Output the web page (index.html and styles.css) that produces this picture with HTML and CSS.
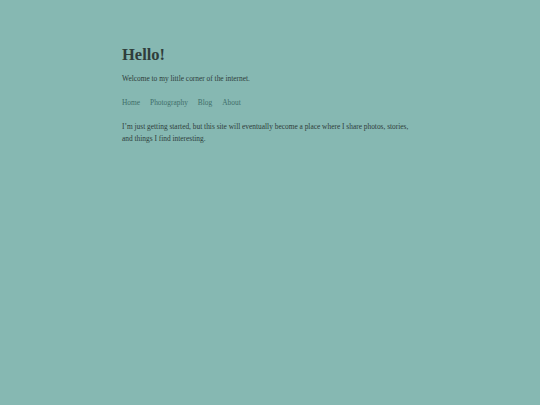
FILE: index.html
```html
<!DOCTYPE html>
<html lang="en">
<head>
<meta charset="utf-8">
<title>Hello!</title>
<link rel="stylesheet" href="styles.css">
</head>
<body>
<main class="page">
  <h1 class="title">Hello!</h1>
  <p class="intro">Welcome to my little corner of the internet.</p>
  <nav class="nav">
    <a href="#">Home</a>
    <a href="#">Photography</a>
    <a href="#">Blog</a>
    <a href="#">About</a>
  </nav>
  <p class="body-text">I’m just getting started, but this site will eventually become a place where I share photos, stories, and things I find interesting.</p>
</main>
</body>
</html>
```
FILE: styles.css
```css
html, body {
  margin: 0;
  padding: 0;
  background: #86b8b2;
}
body {
  font-family: "Liberation Serif", Georgia, serif;
  color: #2f3d3b;
}
.page {
  max-width: 296px;
  margin: 0 auto;
  padding-top: 45px;
}
.title {
  margin: 0;
  font-size: 16.5px;
  line-height: 20px;
  font-weight: bold;
}
.intro {
  margin: 8px 0 0;
  font-size: 7.4px;
  line-height: 12px;
}
.nav {
  display: flex;
  gap: 10px;
  margin-top: 12px;
  font-size: 7.4px;
  line-height: 12px;
}
.nav a {
  color: #3f6e69;
  text-decoration: none;
}
.body-text {
  margin: 12px 0 0;
  font-size: 7.4px;
  line-height: 12px;
}
```
